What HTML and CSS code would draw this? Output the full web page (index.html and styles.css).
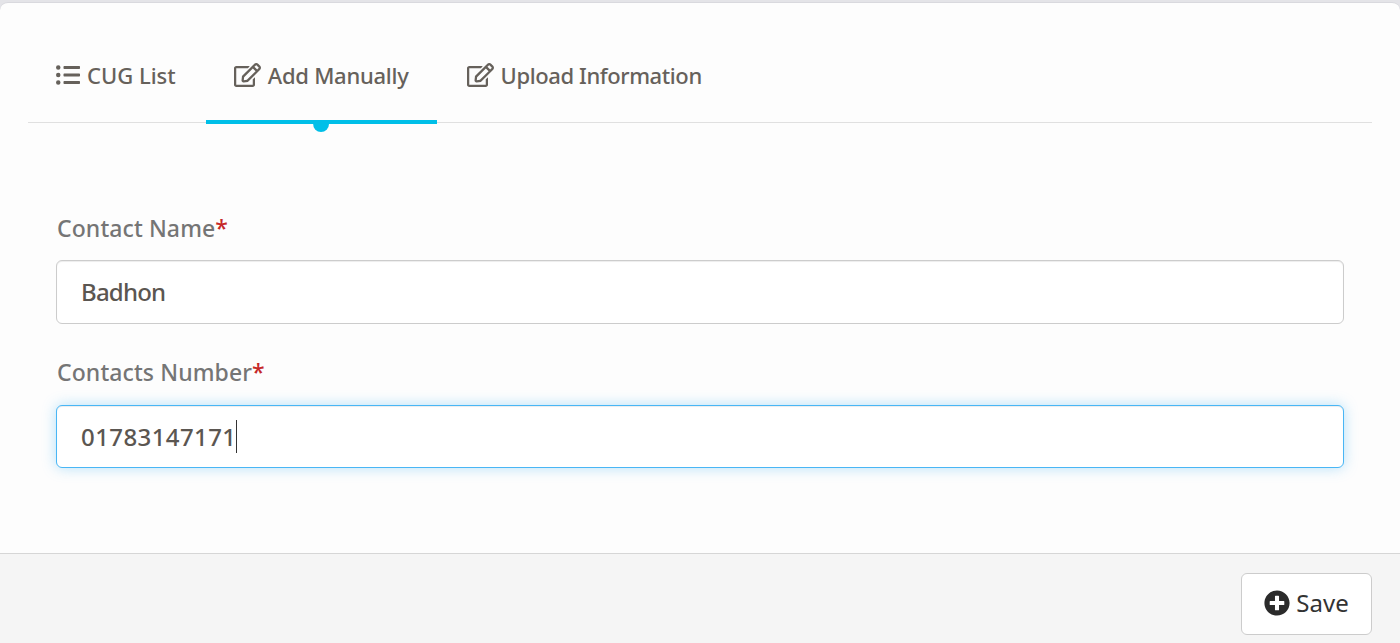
FILE: index.html
```html
<!DOCTYPE html>
<html lang="en">
<head>
<meta charset="utf-8">
<title>CUG</title>
<link rel="stylesheet" href="styles.css">
</head>
<body>
<div class="card">
  <div class="card-body">
    <ul class="tabs">
      <li class="tab">
        <svg class="icon icon-list" viewBox="0 0 512 512"><path d="M48 48a48 48 0 1 0 48 48 48 48 0 0 0-48-48zm0 160a48 48 0 1 0 48 48 48 48 0 0 0-48-48zm0 160a48 48 0 1 0 48 48 48 48 0 0 0-48-48zm448 16H176a16 16 0 0 0-16 16v32a16 16 0 0 0 16 16h320a16 16 0 0 0 16-16v-32a16 16 0 0 0-16-16zm0-320H176a16 16 0 0 0-16 16v32a16 16 0 0 0 16 16h320a16 16 0 0 0 16-16V80a16 16 0 0 0-16-16zm0 160H176a16 16 0 0 0-16 16v32a16 16 0 0 0 16 16h320a16 16 0 0 0 16-16v-32a16 16 0 0 0-16-16z"/></svg>
        <span class="tab-text text-cug">CUG List</span>
      </li>
      <li class="tab active">
        <svg class="icon icon-edit" viewBox="0 0 576 512"><path d="M402.3 344.9l32-32c5-5 13.7-1.5 13.7 5.7V464c0 26.5-21.5 48-48 48H48c-26.5 0-48-21.5-48-48V112c0-26.5 21.5-48 48-48h273.5c7.1 0 10.7 8.6 5.7 13.7l-32 32c-1.5 1.5-3.5 2.3-5.7 2.3H48v352h352V350.5c0-2.1.8-4.1 2.3-5.6zm156.6-201.8L296.3 405.7l-90.4 10c-26.2 2.9-48.5-19.2-45.6-45.6l10-90.4L432.9 17.1c22.9-22.9 59.9-22.9 82.7 0l43.2 43.2c22.9 22.9 22.9 60 .1 82.8zM460.1 174L402 115.9 216.2 301.8l-7.3 65.3 65.3-7.3L460.1 174zm64.8-79.7l-43.2-43.2c-4.1-4.1-10.8-4.1-14.8 0L436 82l58.1 58.1 30.9-30.9c4-4.2 4-10.8-.1-14.9z"/></svg>
        <span class="tab-text">Add Manually</span>
      </li>
      <li class="tab">
        <svg class="icon icon-edit" viewBox="0 0 576 512"><path d="M402.3 344.9l32-32c5-5 13.7-1.5 13.7 5.7V464c0 26.5-21.5 48-48 48H48c-26.5 0-48-21.5-48-48V112c0-26.5 21.5-48 48-48h273.5c7.1 0 10.7 8.6 5.7 13.7l-32 32c-1.5 1.5-3.5 2.3-5.7 2.3H48v352h352V350.5c0-2.1.8-4.1 2.3-5.6zm156.6-201.8L296.3 405.7l-90.4 10c-26.2 2.9-48.5-19.2-45.6-45.6l10-90.4L432.9 17.1c22.9-22.9 59.9-22.9 82.7 0l43.2 43.2c22.9 22.9 22.9 60 .1 82.8zM460.1 174L402 115.9 216.2 301.8l-7.3 65.3 65.3-7.3L460.1 174zm64.8-79.7l-43.2-43.2c-4.1-4.1-10.8-4.1-14.8 0L436 82l58.1 58.1 30.9-30.9c4-4.2 4-10.8-.1-14.9z"/></svg>
        <span class="tab-text text-upload">Upload Information</span>
      </li>
    </ul>
    <form class="form">
      <div class="group">
        <div class="label">Contact Name<span class="req">*</span></div>
        <div class="field"><span class="value">Badhon</span></div>
      </div>
      <div class="group">
        <div class="label">Contacts Number<span class="req">*</span></div>
        <div class="field focus"><span class="digits">01783147171</span><span class="caret"></span></div>
      </div>
    </form>
  </div>
  <div class="card-footer">
    <button class="btn" type="button">
      <svg class="icon-plus" viewBox="0 0 512 512"><path d="M256 8C119 8 8 119 8 256s111 248 248 248 248-111 248-248S393 8 256 8zm144 276c0 6.6-5.4 12-12 12h-92v92c0 6.6-5.4 12-12 12h-56c-6.6 0-12-5.4-12-12v-92h-92c-6.6 0-12-5.4-12-12v-56c0-6.6 5.4-12 12-12h92v-92c0-6.6 5.4-12 12-12h56c6.6 0 12 5.4 12 12v92h92c6.6 0 12 5.4 12 12v56z"/></svg>
      <span>Save</span>
    </button>
  </div>
</div>
</body>
</html>
```
FILE: styles.css
```css
* { box-sizing: border-box; }
html, body { height: 100%; }
body {
  margin: 0;
  padding-top: 2px;
  background: #e4e4e8;
  font-family: "Noto Sans", "Open Sans", sans-serif;
  overflow: hidden;
}
.card {
  height: 641px;
  display: flex;
  flex-direction: column;
  background: #fdfdfd;
  border-radius: 8px 8px 0 0;
  border-top: 1px solid #d9d9de;
}
.card-body { flex: 1; padding: 0 28px; }
.tabs {
  display: flex;
  gap: 2px;
  height: 120px;
  margin: 0;
  padding: 0;
  list-style: none;
  border-bottom: 1px solid #e0e0e0;
}
.tab {
  position: relative;
  display: flex;
  align-items: center;
  height: 121px;
  padding: 23px 28px 0;
  color: #66615b;
  font-size: 22px;
  font-weight: 500;
  flex: none;
}
.tab.active { box-shadow: inset 0 -4px 0 #00bfe8; }
.tab.active::after {
  content: "";
  position: absolute;
  left: 50%;
  bottom: -8px;
  width: 16px;
  height: 16px;
  margin-left: -8px;
  border-radius: 50%;
  background: #00bfe8;
  clip-path: inset(8px 0 0 0);
}
.tab-text { white-space: nowrap; letter-spacing: -0.25px; }
.text-cug { letter-spacing: 0; }
.text-upload { letter-spacing: -0.4px; }
.icon { fill: #66615b; flex: none; }
.icon-list { width: 24px; height: 24px; margin-right: 7px; }
.icon-edit { width: 27px; height: 24px; margin-right: 7px; }
.form { padding: 87px 28px 0; }
.group { margin-bottom: 30px; }
.label {
  height: 36px;
  margin-bottom: 14px;
  padding-left: 1px;
  line-height: 36px;
  color: #757575;
  font-size: 23px;
  font-weight: 500;
  letter-spacing: 0.1px;
}
.req { color: #c62828; }
.field {
  display: flex;
  align-items: center;
  height: 64px;
  padding: 0 24px 2px;
  background: #fff;
  border: 1px solid #ccc;
  border-radius: 6px;
  box-shadow: inset 0 1px 1px rgba(0, 0, 0, .075);
  color: #5b5651;
  font-size: 24px;
  font-weight: 500;
}
.value { letter-spacing: -0.8px; }
.field.focus {
  height: 63px;
  margin-top: 15px;
  padding-bottom: 0;
  border-color: #49b6f5;
  box-shadow: inset 0 1px 1px rgba(0, 0, 0, .075), 0 0 14px rgba(73, 182, 245, .4);
}
.digits { letter-spacing: 0.4px; }
.caret { width: 1px; height: 33px; background: #333; }
.card-footer {
  display: flex;
  justify-content: flex-end;
  height: 90px;
  padding: 19px 28px 0;
  background: #f5f5f5;
  border-top: 1px solid #d6d6d6;
}
.btn {
  display: flex;
  align-items: center;
  justify-content: center;
  gap: 6px;
  width: 131px;
  height: 62px;
  padding: 0 0 3px;
  background: #fff;
  border: 1px solid #ccc;
  border-radius: 6px;
  color: #333;
  font-family: inherit;
  font-size: 24px;
}
.icon-plus { width: 26px; height: 26px; fill: #2b2b2b; }
```
